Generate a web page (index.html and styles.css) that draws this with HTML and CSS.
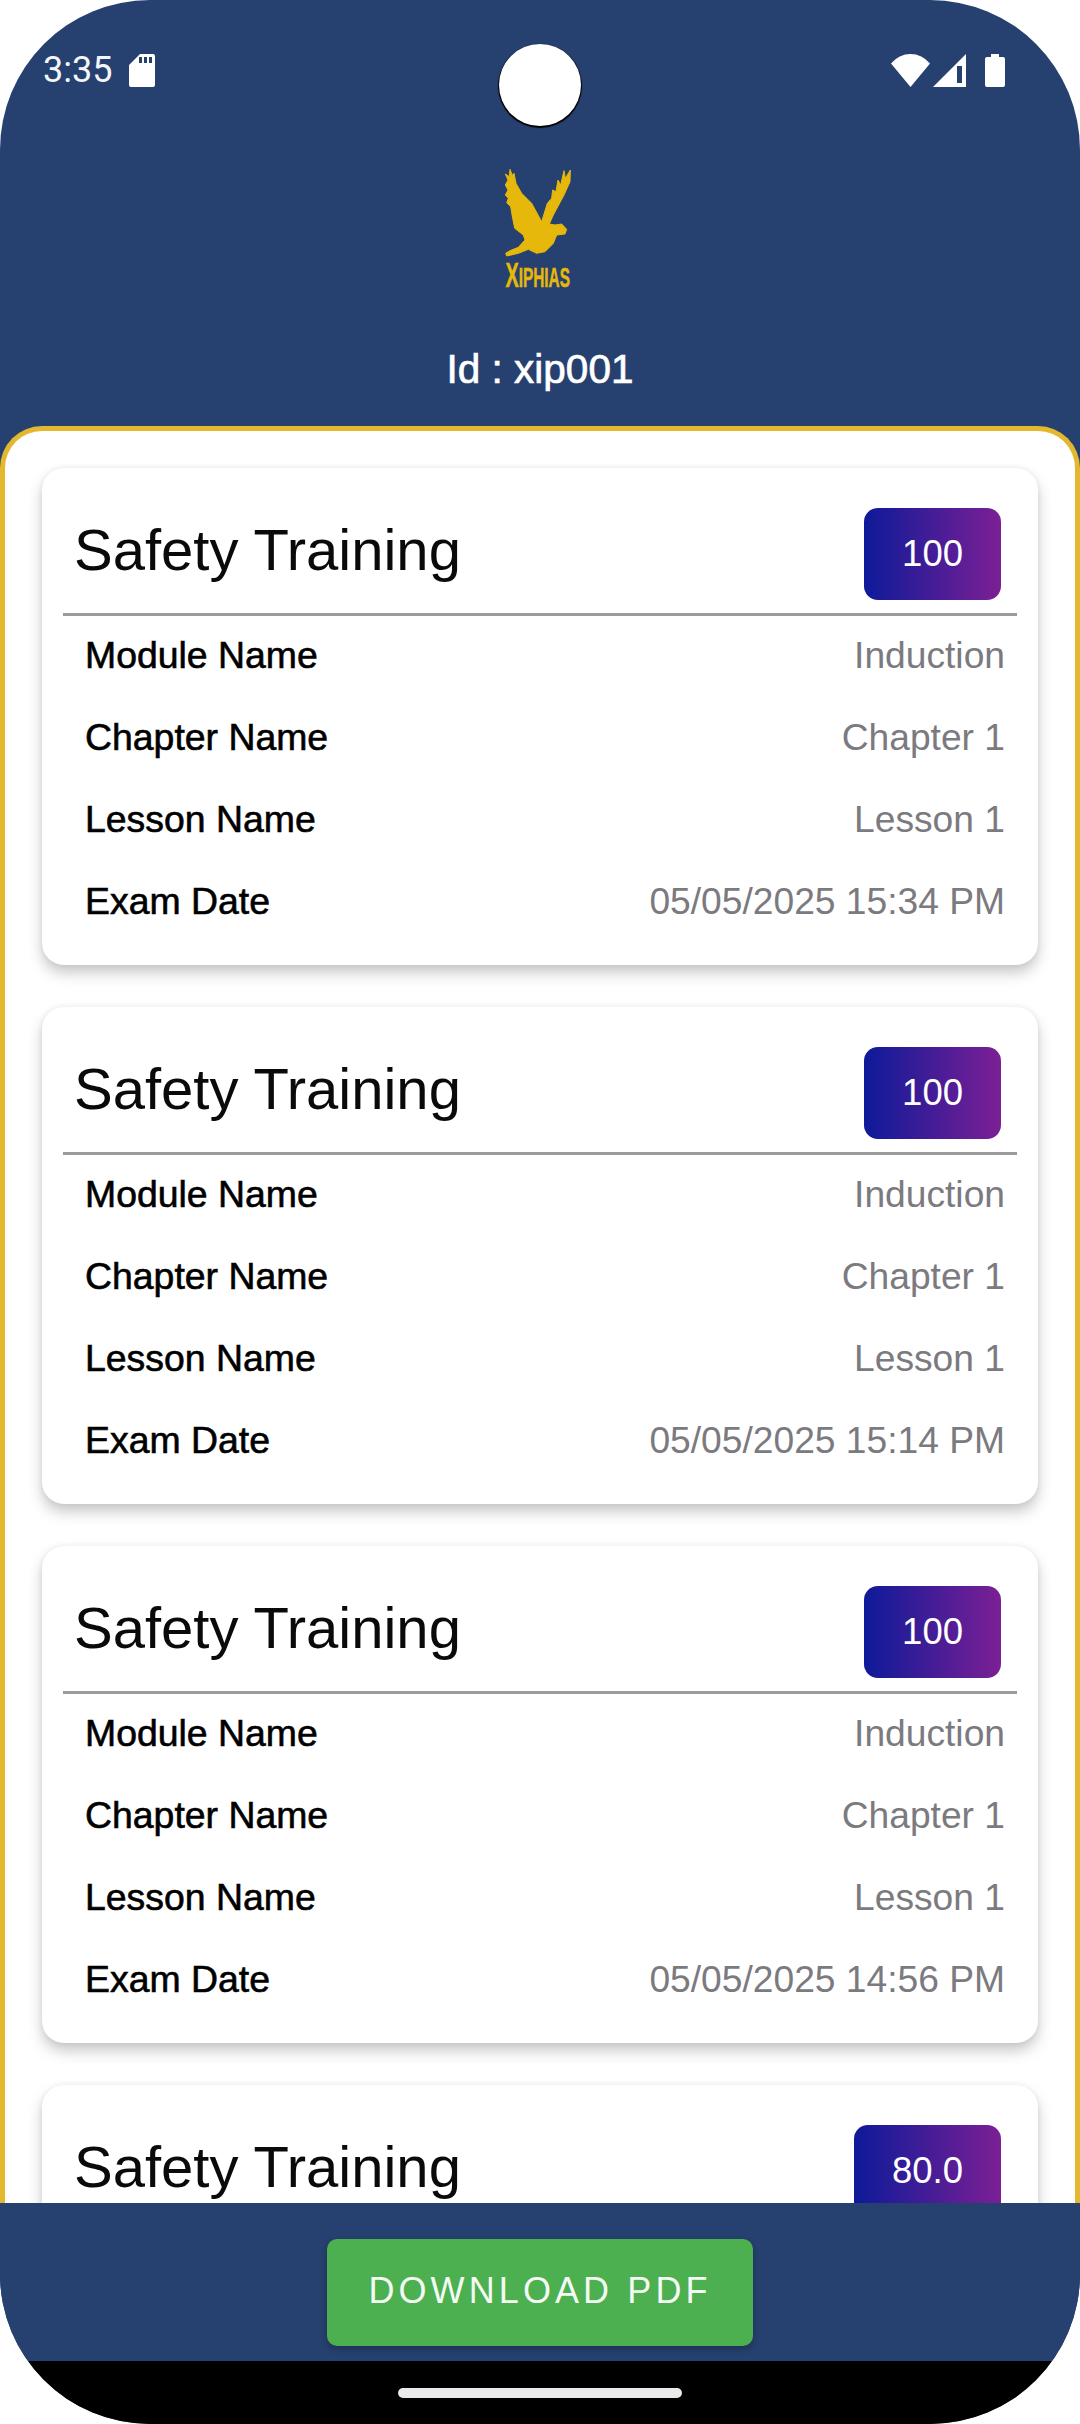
FILE: index.html

```html
<!DOCTYPE html>
<html lang="en">
<head>
    <meta charset="UTF-8">
    <meta name="viewport" content="width=device-width, initial-scale=1.0">
    <title>Exam Results</title>
    <link rel="stylesheet" href="styles.css">
</head>
<body>
    <div class="phone">
        <div class="camera"></div>

        <header class="top">
            <div class="status">
                <div class="status-left">
                    <span class="time">3:35</span>
                    <svg class="ic-sd" viewBox="0 0 26 33"><path fill-rule="evenodd" d="M11 0H24Q26 0 26 2V31Q26 33 24 33H2Q0 33 0 31V11ZM10 3V9H13V3ZM15 3V9H18V3ZM20 3V9H23V3Z"/></svg>
                </div>
                <div class="status-right">
                    <svg class="ic-wifi" viewBox="0 0 39 33"><path d="M19.5 33L0 9.5Q8 0 19.5 0T39 9.5Z"/></svg>
                    <svg class="ic-signal" viewBox="0 0 33 33"><path fill-rule="evenodd" d="M33 0V33H0ZM24 12V29H29V12Z"/></svg>
                    <svg class="ic-battery" viewBox="0 0 20 33"><path d="M6 0H14V3H18Q20 3 20 5V31Q20 33 18 33H2Q0 33 0 31V5Q0 3 2 3H6Z"/></svg>
                </div>
            </div>

            <div class="logo">
                <svg class="logo-bird" viewBox="0 0 300 300"><path d="M60 28L67 46L72 40L78 70L95 100L125 130L155 185L172 130L185 115L188 90L198 95L204 60L212 75L222 32L226 55L241 30L240 65L222 105L190 165L178 192L195 195L215 192L230 208L225 222L200 225L190 250L165 275L140 280L115 268L85 280L50 288L47 280L60 272L85 262L105 240L100 225L74 205L68 175L62 140L50 128L55 115L46 105L54 90L46 75L54 60L46 42L58 50Z"/></svg>
                <div class="logo-name"><span class="logo-x">X</span>IPHIAS</div>
            </div>

            <div class="user-id">Id : xip001</div>
        </header>

        <main class="panel" id="cardList"></main>

        <footer class="bottom">
            <button class="btn-pdf">DOWNLOAD PDF</button>
        </footer>
        <div class="navbar"><div class="home-pill"></div></div>
    </div>

    <script>
    // the last card runs under the footer, only its head shows
    const exams = [
        { score: '100', date: '05/05/2025 15:34 PM' },
        { score: '100', date: '05/05/2025 15:14 PM' },
        { score: '100', date: '05/05/2025 14:56 PM' },
        { score: '80.0' }
    ];

    let cardList = document.getElementById('cardList');
    exams.forEach(exam => {
        let card = document.createElement('section');
        card.className = 'card';
        let rows = '';
        if (exam.date) {
            rows = `
            <div class="divider"></div>
            <div class="row"><span class="label">Module Name</span><span class="value">Induction</span></div>
            <div class="row"><span class="label">Chapter Name</span><span class="value">Chapter 1</span></div>
            <div class="row"><span class="label">Lesson Name</span><span class="value">Lesson 1</span></div>
            <div class="row"><span class="label">Exam Date</span><span class="value">${exam.date}</span></div>
            `;
        }
        card.innerHTML = `
            <div class="card-head">
                <span class="card-title">Safety Training</span>
                <span class="score">${exam.score}</span>
            </div>
            ${rows}
        `;
        cardList.appendChild(card);
    });
    </script>
</body>
</html>
```

FILE: styles.css

```css
* {
    box-sizing: border-box;
}

html, body {
    margin: 0;
    background: #fff;
}

body {
    font-family: "Liberation Sans", Arial, sans-serif;
}

.phone {
    position: relative;
    width: 1080px;
    height: 2424px;
    display: flex;
    flex-direction: column;
    overflow: hidden;
    border-radius: 150px;
    background: #26416f;
}

/* punch hole */
.camera {
    position: absolute;
    top: 44px;
    left: 499px;
    width: 82px;
    height: 82px;
    border-radius: 50%;
    background: #fff;
    box-shadow: 0 1px 1px 1px #000;
}

.top {
    height: 426px;
    flex: none;
    color: #fff;
}

.status {
    display: flex;
    justify-content: space-between;
    padding: 54px 75px 0 43px;
    height: 160px;
}

.status-left, .status-right {
    display: flex;
    align-items: flex-start;
}

.status svg {
    display: block;
    height: 33px;
    fill: #fff;
}

.time {
    font-family: Roboto, sans-serif;
    font-size: 36px;
    line-height: 33px;
    margin-right: 17px;
    color: #f4f6f9;
}

.ic-sd { width: 26px; }
.ic-wifi { width: 39px; margin-right: 3px; }
.ic-signal { width: 33px; margin-right: 19px; }
.ic-battery { width: 20px; }

.logo {
    display: flex;
    flex-direction: column;
    align-items: center;
    height: 136px;
}

.logo-bird {
    display: block;
    width: 100px;
    height: 100px;
    fill: #e5b80b;
    stroke: #e5b80b;
    stroke-width: 3;
}

.logo-name {
    margin-top: -1px;
    margin-left: -4px;
    font-weight: bold;
    font-size: 27px;
    line-height: 32px;
    color: #e5b80b;
    -webkit-text-stroke: 0.5px #e5b80b;
    transform: scaleX(0.57);
}

.logo-x {
    font-size: 35px;
}

.user-id {
    margin-top: 50px;
    text-align: center;
    font-size: 40.5px;
    line-height: 46px;
    -webkit-text-stroke: 0.7px #fff;
}

.panel {
    flex: 1;
    min-height: 0;
    overflow: hidden;
    padding: 37px 37px 0;
    background: #fff;
    border: 5px solid #e3b82f;
    border-bottom: 0;
    border-radius: 42px 42px 0 0;
}

.card {
    height: 497px;
    margin-bottom: 42px;
    background: #fff;
    border-radius: 22px;
    box-shadow: 0 8px 14px rgba(60, 60, 70, 0.28), 0 0 5px rgba(60, 60, 70, 0.08);
}

.card-head {
    display: flex;
    justify-content: space-between;
    align-items: flex-start;
    height: 145px;
    padding: 40px 37px 0 32px;
}

.card-title {
    font-size: 58px;
    line-height: 84px;
    color: #0a0a0a;
}

.score {
    height: 92px;
    padding: 0 38px;
    border-radius: 14px;
    background: linear-gradient(90deg, #0d1a99, #7c1f94);
    color: #fff;
    font-size: 36.5px;
    line-height: 92px;
}

.divider {
    height: 3px;
    margin: 0 21px;
    background: #9c9a9e;
}

.row {
    display: flex;
    justify-content: space-between;
    align-items: center;
    height: 82px;
    padding: 0 33px 3px 43px;
    font-size: 37.4px;
}

.label {
    color: #000;
    -webkit-text-stroke: 0.6px #000;
}

.value {
    font-size: 37.2px;
    color: #7b7a7f;
}

.bottom {
    position: relative;
    height: 158px;
    flex: none;
    display: flex;
    justify-content: center;
    padding-top: 36px;
    background: #26416f;
}

.btn-pdf {
    width: 426px;
    height: 107px;
    border: 0;
    border-radius: 10px;
    background: #4caf50;
    color: #f4faf4;
    font-family: "Liberation Sans", Arial, sans-serif;
    font-size: 36px;
    letter-spacing: 4.1px;
    padding: 0 0 3px;
    box-shadow: 0 3px 6px rgba(0, 0, 0, 0.25);
}

.navbar {
    height: 63px;
    flex: none;
    background: #000;
    padding-top: 27px;
}

.home-pill {
    width: 284px;
    height: 10px;
    margin: 0 auto;
    border-radius: 5px;
    background: #e9e8ea;
}
```
